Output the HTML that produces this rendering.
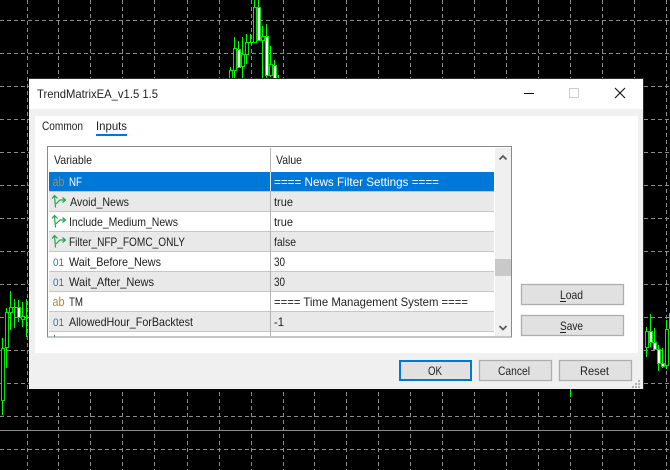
<!DOCTYPE html>
<html><head><meta charset="utf-8"><style>
html,body{margin:0;padding:0;background:#000;width:670px;height:470px;overflow:hidden}
svg{display:block}
text{font-family:"Liberation Sans",sans-serif;font-size:12px;fill:#1e1e1e}
.g line{stroke:#8c8c8c;stroke-width:1;stroke-dasharray:4 3}
.c line{stroke:#00ff00;stroke-width:1}
.c rect{stroke:#00e800;stroke-width:1}
.a path{fill:none;stroke:#1fa84a;stroke-width:1.2}
</style></head><body>
<svg width="670" height="470" viewBox="0 0 670 470" xmlns="http://www.w3.org/2000/svg">
<rect width="670" height="470" fill="#000"/>
<g class="g">
<line x1="27.5" y1="0" x2="27.5" y2="470"/><line x1="58.5" y1="0" x2="58.5" y2="470"/><line x1="90.5" y1="0" x2="90.5" y2="470"/><line x1="122.5" y1="0" x2="122.5" y2="470"/><line x1="154.5" y1="0" x2="154.5" y2="470"/><line x1="187.5" y1="0" x2="187.5" y2="470"/><line x1="219.5" y1="0" x2="219.5" y2="470"/><line x1="251.5" y1="0" x2="251.5" y2="470"/><line x1="283.5" y1="0" x2="283.5" y2="470"/><line x1="314.5" y1="0" x2="314.5" y2="470"/><line x1="346.5" y1="0" x2="346.5" y2="470"/><line x1="378.5" y1="0" x2="378.5" y2="470"/><line x1="410.5" y1="0" x2="410.5" y2="470"/><line x1="442.5" y1="0" x2="442.5" y2="470"/><line x1="474.5" y1="0" x2="474.5" y2="470"/><line x1="506.5" y1="0" x2="506.5" y2="470"/><line x1="538.5" y1="0" x2="538.5" y2="470"/><line x1="570.5" y1="0" x2="570.5" y2="470"/><line x1="602.5" y1="0" x2="602.5" y2="470"/><line x1="634.5" y1="0" x2="634.5" y2="470"/><line x1="666.5" y1="0" x2="666.5" y2="470"/>
<line x1="0" y1="20.5" x2="670" y2="20.5"/><line x1="0" y1="53.5" x2="670" y2="53.5"/><line x1="0" y1="86.5" x2="670" y2="86.5"/><line x1="0" y1="119.5" x2="670" y2="119.5"/><line x1="0" y1="152.5" x2="670" y2="152.5"/><line x1="0" y1="185.5" x2="670" y2="185.5"/><line x1="0" y1="218.5" x2="670" y2="218.5"/><line x1="0" y1="251.5" x2="670" y2="251.5"/><line x1="0" y1="284.5" x2="670" y2="284.5"/><line x1="0" y1="317.5" x2="670" y2="317.5"/><line x1="0" y1="350.5" x2="670" y2="350.5"/><line x1="0" y1="383.5" x2="670" y2="383.5"/><line x1="0" y1="416.5" x2="670" y2="416.5"/><line x1="0" y1="449.5" x2="670" y2="449.5"/>
</g>
<line x1="0" y1="430.5" x2="670" y2="430.5" stroke="#8c8c8c"/>
<g class="c">
<line x1="230.5" y1="67" x2="230.5" y2="80"/><rect x="229.5" y="70.5" width="3" height="10" fill="#000"/>
<line x1="234.5" y1="37" x2="234.5" y2="80"/><rect x="233.5" y="48.5" width="3" height="22" fill="#000"/>
<line x1="238.5" y1="41" x2="238.5" y2="68"/><rect x="237.5" y="49.5" width="3" height="18" fill="#fff"/>
<line x1="242.5" y1="37" x2="242.5" y2="80"/><rect x="241.5" y="54.5" width="3" height="12" fill="#000"/>
<line x1="246.5" y1="34" x2="246.5" y2="64"/><rect x="245.5" y="42.5" width="3" height="12" fill="#000"/>
<line x1="250.5" y1="34" x2="250.5" y2="43"/><line x1="249" y1="42.5" x2="253" y2="42.5"/>
<line x1="254.5" y1="0" x2="254.5" y2="43"/><rect x="253.5" y="7.5" width="3" height="35" fill="#000"/>
<line x1="258.5" y1="0" x2="258.5" y2="41"/><rect x="257.5" y="7.5" width="3" height="33" fill="#fff"/>
<line x1="262.5" y1="26" x2="262.5" y2="80"/><rect x="261.5" y="36.5" width="3" height="4" fill="#000"/>
<line x1="266.5" y1="24" x2="266.5" y2="80"/><rect x="265.5" y="36.5" width="3" height="39" fill="#fff"/>
<line x1="270.5" y1="46" x2="270.5" y2="77"/><rect x="269.5" y="64.5" width="3" height="11" fill="#000"/>
<line x1="274.5" y1="60" x2="274.5" y2="80"/><rect x="273.5" y="65.5" width="3" height="15" fill="#fff"/>
<line x1="278.5" y1="75" x2="278.5" y2="80"/>
<line x1="2.5" y1="338" x2="2.5" y2="415"/><rect x="1.5" y="348.5" width="3" height="52" fill="#000"/>
<line x1="6.5" y1="308" x2="6.5" y2="368"/><rect x="5.5" y="312.5" width="3" height="35" fill="#000"/>
<line x1="10.5" y1="291" x2="10.5" y2="330"/><rect x="9.5" y="307.5" width="3" height="5" fill="#000"/>
<line x1="14.5" y1="299" x2="14.5" y2="328"/><line x1="12" y1="307.5" x2="18" y2="307.5"/>
<line x1="18.5" y1="300" x2="18.5" y2="322"/><rect x="17.5" y="307.5" width="3" height="10" fill="#fff"/>
<line x1="22.5" y1="302" x2="22.5" y2="327"/><rect x="21.5" y="316.5" width="3" height="3" fill="#000"/>
<line x1="26.5" y1="299" x2="26.5" y2="337"/><line x1="24" y1="317.5" x2="29" y2="317.5"/>
<line x1="646.5" y1="327" x2="646.5" y2="357"/><rect x="645.5" y="331.5" width="3" height="16" fill="#000"/>
<line x1="650.5" y1="314" x2="650.5" y2="347"/><rect x="649.5" y="331.5" width="3" height="11" fill="#fff"/>
<line x1="654.5" y1="328" x2="654.5" y2="349"/><rect x="653.5" y="342.5" width="3" height="7" fill="#fff"/>
<line x1="658.5" y1="345" x2="658.5" y2="371"/><rect x="657.5" y="349.5" width="3" height="14" fill="#fff"/>
<line x1="662.5" y1="348" x2="662.5" y2="368"/><rect x="661.5" y="363.5" width="3" height="3" fill="#fff"/>
<line x1="666.5" y1="320" x2="666.5" y2="369"/><rect x="665.5" y="329.5" width="3" height="36" fill="#000"/>
<line x1="669.5" y1="313" x2="669.5" y2="329"/>
<line x1="570.5" y1="389" x2="570.5" y2="397"/>
</g>
<!-- dialog -->
<rect x="29" y="79" width="614" height="310" fill="#f0f0f0"/>
<rect x="29" y="79" width="614" height="30" fill="#fff"/>
<rect x="35" y="116" width="603" height="237" fill="#fff"/>
<line x1="643.5" y1="79" x2="643.5" y2="389" stroke="#2a2a2a"/>
<line x1="29" y1="78.5" x2="644" y2="78.5" stroke="#2a2a2a"/>
<text x="37" y="98" textLength="121" lengthAdjust="spacingAndGlyphs">TrendMatrixEA_v1.5 1.5</text>
<line x1="524" y1="93.5" x2="534" y2="93.5" stroke="#111"/>
<rect x="569.5" y="88.5" width="9" height="9" fill="none" stroke="#ccc"/>
<path d="M615 88 L625 98 M625 88 L615 98" stroke="#111" fill="none" stroke-width="1.1"/>
<text x="42" y="130" textLength="41" lengthAdjust="spacingAndGlyphs">Common</text>
<text x="96" y="130" textLength="31" lengthAdjust="spacingAndGlyphs">Inputs</text>
<rect x="96" y="134" width="31" height="2" fill="#0078d7"/>
<!-- table -->
<rect x="47.5" y="146.5" width="464" height="190.5" fill="#fff" stroke="#8a8a8a"/>
<rect x="49" y="172" width="445" height="19" fill="#0078d7"/>
<rect x="49" y="192" width="445" height="19" fill="#e9e9e9"/>
<rect x="49" y="232" width="445" height="19" fill="#e9e9e9"/>
<rect x="49" y="272" width="445" height="19" fill="#e9e9e9"/>
<rect x="49" y="312" width="445" height="19" fill="#e9e9e9"/>
<g stroke="#c6c6c6"><line x1="49" y1="191.5" x2="494" y2="191.5"/><line x1="49" y1="211.5" x2="494" y2="211.5"/><line x1="49" y1="231.5" x2="494" y2="231.5"/><line x1="49" y1="251.5" x2="494" y2="251.5"/><line x1="49" y1="271.5" x2="494" y2="271.5"/><line x1="49" y1="291.5" x2="494" y2="291.5"/><line x1="49" y1="311.5" x2="494" y2="311.5"/><line x1="49" y1="331.5" x2="494" y2="331.5"/></g>
<line x1="270.5" y1="148" x2="270.5" y2="336" stroke="#b4b4b4"/>
<line x1="270.5" y1="172" x2="270.5" y2="191" stroke="#fff" stroke-opacity=".75"/>
<rect x="495" y="148" width="16" height="188" fill="#f0f0f0"/>
<rect x="495" y="259" width="16" height="17" fill="#c9c9c9"/>
<path d="M499.5 159.5 L503 156 L506.5 159.5" fill="none" stroke="#5a5a5a" stroke-width="1.8"/>
<path d="M499.5 326 L503 329.5 L506.5 326" fill="none" stroke="#5a5a5a" stroke-width="1.8"/>
<text x="54" y="164" textLength="38" lengthAdjust="spacingAndGlyphs">Variable</text>
<text x="276" y="164" textLength="26" lengthAdjust="spacingAndGlyphs">Value</text>
<!-- icons -->
<text x="52.5" y="186" style="fill:#b58a30;font-size:13px" textLength="12" lengthAdjust="spacingAndGlyphs">ab</text>
<text x="52.5" y="306" style="fill:#b58a30;font-size:13px" textLength="12" lengthAdjust="spacingAndGlyphs">ab</text>
<g class="a">
<path d="M55.5 207.5 L54.5 196 M52 198.5 L54.5 195.5 L57.5 198.5 M56 204 L60 200 L65 200 M62.5 197.5 L65.5 200 L62.5 202.5"/>
<path d="M55.5 227.5 L54.5 216 M52 218.5 L54.5 215.5 L57.5 218.5 M56 224 L60 220 L65 220 M62.5 217.5 L65.5 220 L62.5 222.5"/>
<path d="M55.5 247.5 L54.5 236 M52 238.5 L54.5 235.5 L57.5 238.5 M56 244 L60 240 L65 240 M62.5 237.5 L65.5 240 L62.5 242.5"/>
</g>
<text x="53" y="266" style="fill:#2a78b0;font-size:11px" textLength="11" lengthAdjust="spacingAndGlyphs">01</text>
<text x="53" y="286" style="fill:#2a78b0;font-size:11px" textLength="11" lengthAdjust="spacingAndGlyphs">01</text>
<text x="53" y="326" style="fill:#2a78b0;font-size:11px" textLength="11" lengthAdjust="spacingAndGlyphs">01</text>
<rect x="54" y="335" width="1" height="1.5" fill="#1fa84a"/>
<!-- rows -->
<text x="69" y="186" style="fill:#fff" textLength="13" lengthAdjust="spacingAndGlyphs">NF</text>
<text x="274" y="186" style="fill:#fff" textLength="165" lengthAdjust="spacingAndGlyphs">==== News Filter Settings ====</text>
<text x="70" y="206" textLength="59" lengthAdjust="spacingAndGlyphs">Avoid_News</text><text x="274" y="206" textLength="19" lengthAdjust="spacingAndGlyphs">true</text>
<text x="69" y="226" textLength="109" lengthAdjust="spacingAndGlyphs">Include_Medium_News</text><text x="274" y="226" textLength="19" lengthAdjust="spacingAndGlyphs">true</text>
<text x="69" y="246" textLength="116" lengthAdjust="spacingAndGlyphs">Filter_NFP_FOMC_ONLY</text><text x="274" y="246" textLength="22" lengthAdjust="spacingAndGlyphs">false</text>
<text x="69" y="266" textLength="92" lengthAdjust="spacingAndGlyphs">Wait_Before_News</text><text x="274" y="266" textLength="11" lengthAdjust="spacingAndGlyphs">30</text>
<text x="69" y="286" textLength="85" lengthAdjust="spacingAndGlyphs">Wait_After_News</text><text x="274" y="286" textLength="11" lengthAdjust="spacingAndGlyphs">30</text>
<text x="69" y="306" textLength="14" lengthAdjust="spacingAndGlyphs">TM</text><text x="274" y="306" textLength="194" lengthAdjust="spacingAndGlyphs">==== Time Management System ====</text>
<text x="69" y="326" textLength="124" lengthAdjust="spacingAndGlyphs">AllowedHour_ForBacktest</text><text x="274" y="326" textLength="10" lengthAdjust="spacingAndGlyphs">-1</text>
<!-- buttons -->
<g fill="#e1e1e1" stroke="#adadad" stroke-width="1.3">
<rect x="521.5" y="284.5" width="102" height="20"/>
<rect x="521.5" y="315.5" width="102" height="20"/>
<rect x="479.5" y="360.5" width="72" height="20"/>
<rect x="559.5" y="360.5" width="72" height="20"/>
</g>
<rect x="400" y="361" width="71" height="19" fill="#e1e1e1" stroke="#0078d7" stroke-width="2"/>
<text x="560" y="299" textLength="23" lengthAdjust="spacingAndGlyphs">Load</text>
<rect x="560" y="301" width="6" height="1" fill="#1e1e1e"/>
<text x="560" y="330" textLength="23" lengthAdjust="spacingAndGlyphs">Save</text>
<rect x="560" y="332" width="6" height="1" fill="#1e1e1e"/>
<text x="428" y="375" textLength="14" lengthAdjust="spacingAndGlyphs">OK</text>
<text x="498" y="375" textLength="32" lengthAdjust="spacingAndGlyphs">Cancel</text>
<text x="580" y="375" textLength="29" lengthAdjust="spacingAndGlyphs">Reset</text>
<g fill="#b4b4b4"><rect x="638" y="380" width="2" height="2"/><rect x="635" y="383" width="2" height="2"/><rect x="638" y="383" width="2" height="2"/><rect x="632" y="386" width="2" height="2"/><rect x="635" y="386" width="2" height="2"/><rect x="638" y="386" width="2" height="2"/></g>
</svg>
</body></html>
